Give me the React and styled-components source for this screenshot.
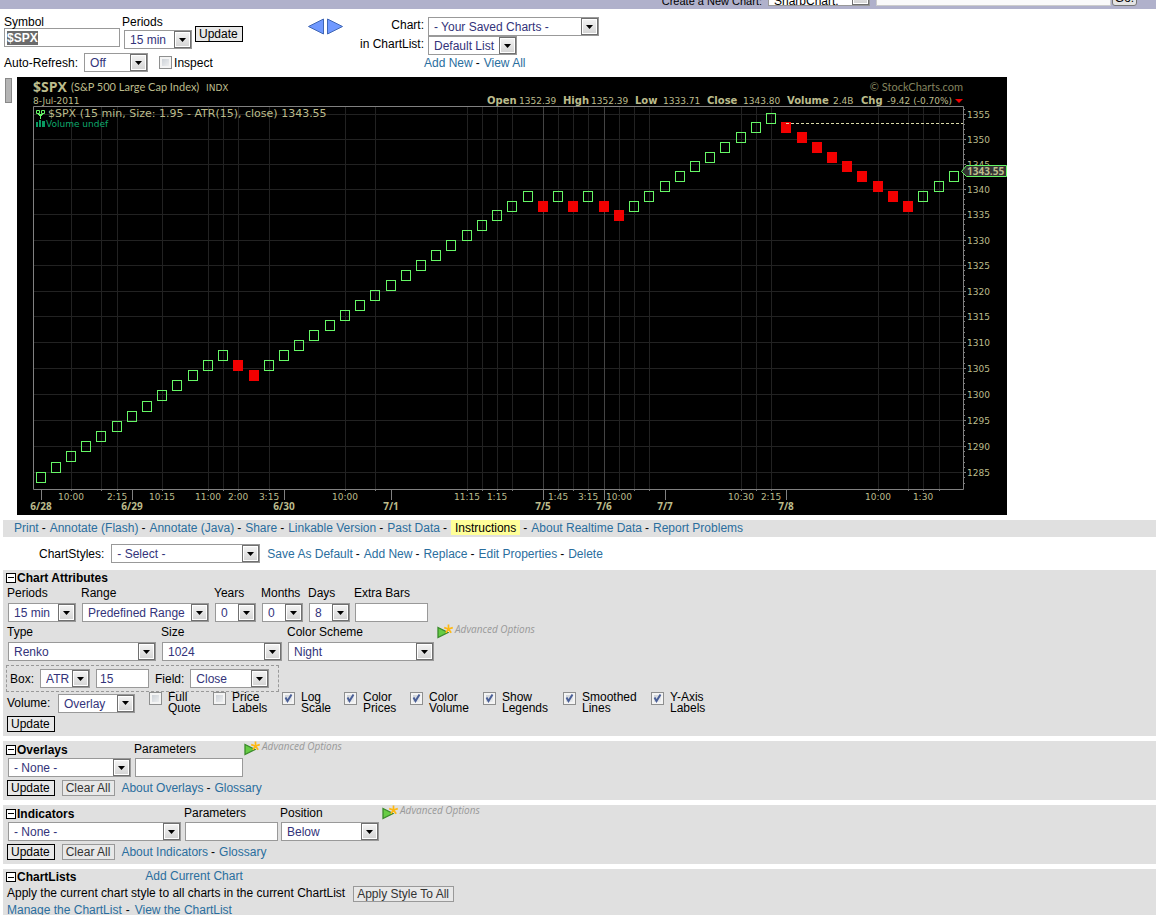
import React, { useEffect, useRef } from "react";
import styled, { createGlobalStyle } from "styled-components";

const GlobalStyle = createGlobalStyle`
	* {
		box-sizing: border-box;
	}
	body {
		margin: 0;
		background-color: #fff;
		color: #000;
		font: 12px/16px "Liberation Sans", Arial, sans-serif;
	}
	input, select, button {
		font: inherit;
		margin: 0;
		padding: 0;
		border-radius: 0;
	}
`;

/* ---------- shared controls ---------- */

const Link = styled.a`
	color: #2a6e9e;
	text-decoration: none;
	&:hover {
		text-decoration: underline;
	}
`;
const Dash = styled.span`
	width: 5px;
`;
const SelectFrame = styled.span`
	position: relative;
	display: flex;
	flex: none;
	width: ${(p) => p.$width}px;
	height: 19px;
	border: 1px solid #999;
	background-color: #fff;
`;
const SelectInput = styled.select`
	appearance: none;
	width: 100%;
	border: 0;
	padding: 2px 17px 0 5px;
	background-color: transparent;
	color: #33337a;
	line-height: 15px;
	outline: 0;
`;
const SelectArrow = styled.span`
	position: absolute;
	top: 0;
	right: 0;
	bottom: 0;
	width: 17px;
	display: flex;
	align-items: center;
	justify-content: center;
	border: 1px solid #707070;
	box-shadow: inset 0 0 0 1px #fff;
	background: linear-gradient(#f4f4f4, #d4d4d4);
	pointer-events: none;
`;
const TextInput = styled.input`
	width: ${(p) => p.$width}px;
	height: 19px;
	border: 1px solid #999;
	padding: 0 3px;
	background-color: #fff;
	color: #33337a;
	outline: 0;
`;
const Button = styled.button`
	flex: none;
	height: 16px;
	padding: 0 4px 0 3px;
	border: 1px solid ${(p) => (p.$muted ? "#999" : "#000")};
	background-color: #e8e8e8;
	color: ${(p) => (p.$muted ? "#333" : "#000")};
	line-height: 14px;
`;
const CheckLabel = styled.label`
	display: flex;
	gap: 6px;
	width: ${(p) => p.$width}px;
	line-height: 11px;
`;
const CheckFrame = styled.span`
	position: relative;
	flex: none;
	width: 13px;
	height: 13px;
`;
const CheckInput = styled.input`
	appearance: none;
	display: block;
	width: 13px;
	height: 13px;
	border: 1px solid #8e8f8f;
	box-shadow: inset 0 0 0 2px #f4f4f4;
	background: linear-gradient(135deg, #c4cad1, #f6f6f6);
	& + svg {
		display: none;
	}
	&:checked + svg {
		display: block;
	}
`;
const CheckMark = styled.svg`
	position: absolute;
	top: 0;
	left: 0;
	pointer-events: none;
`;

function Select({ value, width, label, id }) {
	return (
		<SelectFrame $width={width}>
			<SelectInput id={id} aria-label={label} defaultValue={value}>
				<option>{value}</option>
			</SelectInput>
			<SelectArrow>
				<svg width="7" height="4" viewBox="0 0 7 4">
					<path d="M0 0H7L3.5 4Z" fill="#000" />
				</svg>
			</SelectArrow>
		</SelectFrame>
	);
}

function Check({ checked, label }) {
	return (
		<CheckFrame>
			<CheckInput type="checkbox" defaultChecked={checked} aria-label={label} />
			<CheckMark width="13" height="13" viewBox="0 0 13 13">
				<path d="M3.5 5.5 L5.5 9 L9.5 2.5" fill="none" stroke="#4a5f97" strokeWidth="2" />
			</CheckMark>
		</CheckFrame>
	);
}

function LinkList({ items }) {
	return items.map((item, i) => (
		<React.Fragment key={item}>
			{i > 0 && <Dash>-</Dash>}
			<Link href="#">{item}</Link>
		</React.Fragment>
	));
}

/* ---------- top bar and symbol form ---------- */

const TopBar = styled.header`
	display: flex;
	align-items: flex-end;
	justify-content: flex-end;
	height: 9px;
	padding: 0 19px 3px 0;
	overflow: hidden;
	background-color: #b0b1cb;
	${SelectInput} {
		padding-top: 6px;
		color: #000;
	}
`;
const TopLabel = styled.label`
	margin-right: 6px;
	line-height: 10px;
	font-size: 11px;
`;
const TopInput = styled.input`
	width: 235px;
	height: 19px;
	margin: 0 1px 0 6px;
	border: 1px solid #ccc;
	background-color: #fafafa;
`;
const GoButton = styled.button`
	width: 25px;
	height: 19px;
	padding-top: 4px;
	border: 1px solid #777;
	border-radius: 3px;
	background-color: #e4e4e4;
	line-height: 13px;
`;
const FormBar = styled.div`
	display: flex;
	height: 68px;
	padding: 5px 4px 0;
`;
const SymbolForm = styled.form`
	width: 303px;
`;
const SymbolRow = styled.div`
	display: flex;
	height: 38px;
`;
const SymbolInput = styled(TextInput)`
	display: block;
	margin-top: -2px;
	padding: 0 2px;
	color: #000;
	font-weight: bold;
	&::selection {
		background-color: #6b6b6b;
		color: #fff;
	}
`;
const SymbolCell = styled.div`
	width: 118px;
`;
const PeriodCell = styled.div`
	width: 73px;
`;
const FormLabel = styled.label`
	display: block;
`;
const RefreshRow = styled.div`
	display: flex;
	align-items: center;
	height: 21px;
	gap: 6px;
`;
const InspectLabel = styled.label`
	display: flex;
	align-items: center;
	gap: 2px;
	margin-left: 5px;
`;
const UpdateCell = styled.div`
	padding-top: 12px;
`;
const Arrows = styled.svg`
	margin: 4px 0 0;
	flex: none;
`;
const SavedForm = styled.form`
	display: grid;
	grid-template-columns: 80px auto;
	grid-template-rows: 19px 19px 16px;
	column-gap: 4px;
	padding-top: 3px;
	line-height: 17px;
`;
const SavedLabel = styled.label`
	text-align: right;
`;
const SavedLinks = styled.div`
	grid-column: 2;
	display: flex;
	gap: 3px;
	margin-left: -4px;
`;

function SymbolBar() {
	const symbolRef = useRef(null);
	useEffect(() => {
		symbolRef.current.focus();
		symbolRef.current.select();
	}, []);
	return (
		<FormBar>
			<SymbolForm>
				<SymbolRow>
					<SymbolCell>
						<FormLabel htmlFor="symbol">Symbol</FormLabel>
						<SymbolInput id="symbol" ref={symbolRef} $width={116} defaultValue="$SPX" />
					</SymbolCell>
					<PeriodCell>
						<FormLabel htmlFor="top-period">Periods</FormLabel>
						<Indent>
							<Select id="top-period" value="15 min" width={68} />
						</Indent>
					</PeriodCell>
					<UpdateCell>
						<Button type="button">Update</Button>
					</UpdateCell>
				</SymbolRow>
				<RefreshRow>
					<label htmlFor="refresh">Auto-Refresh:</label>
					<Select id="refresh" value="Off" width={64} />
					<InspectLabel>
						<Check label="Inspect" />
						Inspect
					</InspectLabel>
				</RefreshRow>
			</SymbolForm>
			<Arrows width="37" height="17" viewBox="0 0 37 17">
				<path d="M1.5 8.5L16.5 1V16Z" fill="#7099ff" stroke="#3f66b5" />
				<path d="M35.5 8.5L20.5 1V16Z" fill="#7099ff" stroke="#3f66b5" />
			</Arrows>
			<SavedForm>
				<SavedLabel htmlFor="saved">Chart:</SavedLabel>
				<Select id="saved" value="- Your Saved Charts -" width={171} />
				<SavedLabel htmlFor="list">in ChartList:</SavedLabel>
				<Select id="list" value="Default List" width={89} />
				<SavedLinks>
					<LinkList items={["Add New", "View All"]} />
				</SavedLinks>
			</SavedForm>
		</FormBar>
	);
}

/* ---------- chart ---------- */

const ChartRow = styled.div`
	display: flex;
	align-items: flex-start;
	padding-left: 5px;
`;
const Handle = styled.div`
	flex: none;
	width: 7px;
	height: 25px;
	margin: 1px 5px 0 0;
	border: 1px solid #888;
	background-color: #b4b4b4;
`;
const ChartSvg = styled.svg`
	display: block;
	width: 100%;
	max-width: 990px;
	height: auto;
	background-color: #000;
	font: 9px "DejaVu Sans", Verdana, sans-serif;
	fill: #bcbc8c;
`;

const BRICK = 1.95;
const TOP_PRICE = 1354.2;
const RUNS = [-12, 2, -18, 1, -1, 1, -1, 2, -10, 9, -3];
const GRID_BARS = [
	2, 4, 5, 8, 11, 12, 13, 15, 20, 22, 28, 29, 30, 31, 34, 35, 36, 38, 39, 40,
	46, 47, 48, 55, 57, 58, 59,
];
const TIMES = [
	[2, "10:00"], [5, "2:15"], [8, "10:15"], [11, "11:00"], [13, "2:00"],
	[15, "3:15"], [20, "10:00"], [28, "11:15"], [30, "1:15"], [34, "1:45"],
	[36, "3:15"], [38, "10:00"], [46, "10:30"], [48, "2:15"], [55, "10:00"],
	[58, "1:30"],
];
const DATES = [
	[0, "6/28"], [6, "6/29"], [16, "6/30"], [23, "7/1"], [33, "7/5"],
	[37, "7/6"], [41, "7/7"], [49, "7/8"],
];
const PRICES = Array.from({ length: 15 }, (_, i) => 1355 - i * 5);
const QUOTE = [
	[470, "Open", 502, "1352.39"],
	[546, "High", 574, "1352.39"],
	[618, "Low", 646, "1333.71"],
	[690, "Close", 726, "1343.80"],
	[770, "Volume", 816, "2.4B"],
	[844, "Chg", 870, "-9.42 (-0.70%)"],
];

const xOf = (bar) => Math.floor(24 + bar * 15.221);
const priceY = (price) => 37 + 6750 * Math.log(1355 / price);
const yOf = (price) => Math.round(priceY(price));

function makeBricks() {
	let level = 36;
	const bricks = [{ level, down: false }];
	RUNS.forEach((run) => {
		const step = Math.sign(run);
		for (let i = 0; i < Math.abs(run); i++) {
			level += step;
			bricks.push({ level, down: step > 0 });
		}
	});
	return bricks;
}

function RenkoChart() {
	return (
		<ChartSvg viewBox="0 0 990 438" role="img" aria-label="$SPX Renko chart">
			<g stroke="#222">
				{PRICES.map((p) => (
					<path key={p} d={`M17 ${yOf(p) + 0.5}H946`} />
				))}
				{GRID_BARS.map((b) => (
					<path key={b} d={`M${xOf(b) + 0.5} 30V412`} />
				))}
			</g>
			<g stroke="#444">
				<path d={`M${xOf(33) + 0.5} 30V412M${xOf(37) + 0.5} 30V412`} />
			</g>
			<g stroke="#808080" fill="none">
				<path d="M16.5 412.5V29.5H946.5V412.5Z" />
				{DATES.map(([b]) => (
					<path key={b} d={`M${xOf(b) + 0.5} 413V423`} />
				))}
				{GRID_BARS.map((b) => (
					<path key={b} d={`M${xOf(b) + 0.5} 413V414`} />
				))}
				{PRICES.map((p) => (
					<path key={p} d={`M947 ${yOf(p) + 0.5}H949`} />
				))}
				{Array.from({ length: 74 }, (_, i) => 1356 - i)
					.filter((p) => yOf(p) < 412)
					.map((p) => (
						<path key={p} d={`M947 ${yOf(p) + 0.5}H948`} />
					))}
			</g>

			{makeBricks().map(({ level, down }, i) => {
				const x = xOf(i);
				const top = Math.round(priceY(TOP_PRICE - level * BRICK) - 5.4);
				return down ? (
					<rect key={i} x={x - 5} y={top} width="10" height="11" fill="#f20000" />
				) : (
					<rect key={i} x={x - 4.5} y={top + 0.5} width="9" height="10" fill="none" stroke="#66f766" />
				);
			})}
			<path d="M769 46.5H946" stroke="#d8d8a8" strokeDasharray="3 2" />

			<text x="16" y="15" fontSize="14" fontWeight="bold" fontFamily="Open Sans">$SPX</text>
			<text x="54" y="14" fontSize="11" fontFamily="Lato">(S&amp;P 500 Large Cap Index)</text>
			<text x="189" y="14">INDX</text>
			<text x="16" y="27">8-Jul-2011</text>
			<text x="946" y="14" fontSize="11" textAnchor="end" fontFamily="Lato" fill="#84845f">© StockCharts.com</text>
			{QUOTE.map(([lx, label, vx, value]) => (
				<React.Fragment key={label}>
					<text x={lx} y="27" fontSize="10" fontWeight="bold">{label}</text>
					<text x={vx} y="27">{value}</text>
				</React.Fragment>
			))}
			<path d="M938 22H946L942 26Z" fill="#f20000" />

			<path d="M19.5 33.5H22.5V36.5H19.5ZM24.5 33.5H27.5V36.5H24.5ZM21 37.5H26M22 38.5H25M23.5 39V42" fill="none" stroke="#66f766" />
			<text x="31" y="40" fontSize="11">$SPX (15 min, Size: 1.95 - ATR(15), close) 1343.55</text>
			<path d="M19 50V45H21V50ZM22 50V43H24V50ZM25 50V44H28V50Z" fill="#0a9a62" />
			<text x="29" y="50" fill="#0fa86c">Volume undef</text>

			{PRICES.map((p) => (
				<text key={p} x="950" y={yOf(p) + 4}>{p}</text>
			))}
			<path d="M944.5 94.5L949.5 88.5H989.5V99.5H949.5Z" fill="#333" stroke="#66f766" />
			<text x="950" y="98" fontSize="10" fontWeight="bold" fontFamily="Open Sans">1343.55</text>
			{TIMES.map(([b, t]) => (
				<text key={b} x={xOf(b)} y="423" textAnchor="middle">{t}</text>
			))}
			{DATES.map(([b, t]) => (
				<text key={b} x={xOf(b)} y="433" textAnchor="middle" fontSize="10" fontWeight="bold" fontFamily="Open Sans">{t}</text>
			))}
		</ChartSvg>
	);
}

/* ---------- link rows ---------- */

const LinkBar = styled.nav`
	display: flex;
	gap: 3px;
	margin: 5px 0 0 3px;
	padding-left: 11px;
	height: 17px;
	background-color: #e0e0e0;
`;
const Highlight = styled.a`
	height: 15px;
	padding: 0 4px;
	background-color: #ffff99;
	color: #000;
	text-decoration: none;
`;
const StyleRow = styled.div`
	display: flex;
	align-items: center;
	gap: 7px;
	height: 33px;
	padding-left: 39px;
`;
const StyleLinks = styled.span`
	display: flex;
	gap: 3px;
`;

/* ---------- settings panels ---------- */

const Panel = styled.section`
	margin: 0 0 5px 3px;
	padding: 0 3px 4px;
	background-color: #e0e0e0;
`;
const PanelTitle = styled.h2`
	display: flex;
	align-items: center;
	gap: 1px;
	height: ${(p) => p.$height || 17}px;
	margin: 0;
	font-size: 12px;
`;
const ToggleButton = styled.button`
	display: flex;
	align-items: center;
	justify-content: center;
	width: 10px;
	height: 10px;
	border: 1px solid #000;
	background-color: #fff;
`;
const Row = styled.div`
	display: flex;
	align-items: flex-start;
	padding-left: ${(p) => (p.$flush ? 0 : 1)}px;
	margin-bottom: ${(p) => p.$after || 0}px;
`;
const FieldBox = styled.div`
	width: ${(p) => p.$width}px;
`;
const FieldLabel = styled.label`
	display: block;
	height: ${(p) => (p.$tight ? 17 : 18)}px;
`;
const Indent = styled.div`
	display: flex;
	padding-left: 2px;
`;
const FieldControl = styled.div`
	display: flex;
	padding-left: 1px;
`;
const BoxRow = styled.div`
	display: flex;
	align-items: center;
	gap: 6px;
	width: 273px;
	height: 27px;
	padding: 0 3px;
	border: 1px dashed #999;
`;
const VolumeRow = styled.div`
	display: flex;
	height: 24px;
	padding: 0 0 0 1px;
`;
const VolumeField = styled.div`
	display: flex;
	align-items: center;
	justify-content: space-between;
	width: 128px;
	height: 22px;
	margin-right: 14px;
`;
const ButtonRow = styled.div`
	display: flex;
	align-items: center;
	gap: 6px;
	padding: 3px 0 0 1px;
`;
const ClearButton = styled(Button)`
	margin-left: 1px;
`;
const Advanced = styled.a`
	display: flex;
	gap: 2px;
	color: #999;
	font: italic 10px/11px "Open Sans", sans-serif;
	text-decoration: none;
`;
const ListHead = styled.div`
	display: flex;
	gap: 69px;
	line-height: 14px;
`;
const ListPanel = styled(Panel)`
	margin-bottom: 0;
	padding-bottom: 0;
`;
const ListRow = styled.div`
	display: flex;
	gap: ${(p) => p.$gap}px;
	height: 17px;
	padding-left: 1px;
	${Button} {
		align-self: flex-end;
	}
`;

function Title({ children, height }) {
	return (
		<PanelTitle $height={height}>
			<ToggleButton aria-label={`Collapse ${children}`}>
				<svg width="6" height="1" viewBox="0 0 6 1">
					<path d="M0 .5H6" stroke="#000" />
				</svg>
			</ToggleButton>
			{children}
		</PanelTitle>
	);
}

function Field({ id, label, pitch, width, value, tight }) {
	return (
		<FieldBox $width={pitch}>
			<FieldLabel htmlFor={id} $tight={tight}>{label}</FieldLabel>
			<FieldControl>
				{value ? (
					<Select id={id} value={value} width={width} />
				) : (
					<TextInput id={id} $width={width} />
				)}
			</FieldControl>
		</FieldBox>
	);
}

function AdvancedOptions() {
	return (
		<Advanced href="#">
			<svg width="16" height="15" viewBox="0 0 16 15">
				<path d="M1 3.5L11 8.5L1 13.5Z" fill="#66cc44" stroke="#3a8a2a" strokeWidth="1.3" />
				<path
					d="M11.5 5V0.5M11.5 5L15.8 3.6M11.5 5L14.2 8.7M11.5 5L8.8 8.7M11.5 5L7.2 3.6"
					stroke="#fdb813"
					strokeWidth="1.7"
				/>
			</svg>
			Advanced Options
		</Advanced>
	);
}

const CHECKS = [
	["Full", "Quote", false, 64],
	["Price", "Labels", false, 69],
	["Log", "Scale", true, 62],
	["Color", "Prices", true, 66],
	["Color", "Volume", true, 73],
	["Show", "Legends", true, 80],
	["Smoothed", "Lines", true, 88],
	["Y-Axis", "Labels", true, 70],
];

function App() {
	return (
		<>
			<GlobalStyle />
			<TopBar>
				<TopLabel htmlFor="new-chart">Create a New Chart:</TopLabel>
				<Select id="new-chart" value="SharpChart:" width={102} />
				<TopInput aria-label="New chart symbol" />
				<GoButton>Go!</GoButton>
			</TopBar>
			<SymbolBar />
			<ChartRow>
				<Handle />
				<RenkoChart />
			</ChartRow>
			<LinkBar>
				<LinkList
					items={["Print", "Annotate (Flash)", "Annotate (Java)", "Share", "Linkable Version", "Past Data"]}
				/>
				<Dash>-</Dash>
				<Highlight href="#">Instructions</Highlight>
				<Dash>-</Dash>
				<LinkList items={["About Realtime Data", "Report Problems"]} />
			</LinkBar>
			<StyleRow>
				<label htmlFor="chart-style">ChartStyles:</label>
				<Select id="chart-style" value="- Select -" width={149} />
				<StyleLinks>
					<LinkList items={["Save As Default", "Add New", "Replace", "Edit Properties", "Delete"]} />
				</StyleLinks>
			</StyleRow>

			<Panel>
				<Title height={15}>Chart Attributes</Title>
				<Row $after={2}>
					<Field id="period" label="Periods" pitch={74} width={68} value="15 min" />
					<Field id="range" label="Range" pitch={133} width={127} value="Predefined Range" />
					<Field id="years" label="Years" pitch={47} width={41} value="0" />
					<Field id="months" label="Months" pitch={47} width={41} value="0" />
					<Field id="days" label="Days" pitch={46} width={41} value="8" />
					<Field id="bars" label="Extra Bars" pitch={80} width={73} />
				</Row>
				<Row $after={4}>
					<Field id="type" label="Type" pitch={154} width={148} value="Renko" />
					<Field id="size" label="Size" pitch={126} width={120} value="1024" />
					<Field id="scheme" label="Color Scheme" pitch={150} width={146} value="Night" />
					<AdvancedOptions />
				</Row>
				<BoxRow>
					<label htmlFor="box">Box:</label>
					<Select id="box" value="ATR" width={50} />
					<TextInput aria-label="Box size" $width={53} defaultValue="15" />
					<label htmlFor="field">Field:</label>
					<Select id="field" value="Close" width={79} />
				</BoxRow>
				<VolumeRow>
					<VolumeField>
						<label htmlFor="volume">Volume:</label>
						<Select id="volume" value="Overlay" width={77} />
					</VolumeField>
					{CHECKS.map(([first, second, checked, width]) => (
						<CheckLabel key={first + second} $width={width}>
							<Check checked={checked} label={`${first} ${second}`} />
							<span>
								{first}
								<br />
								{second}
							</span>
						</CheckLabel>
					))}
				</VolumeRow>
				<Row>
					<Button>Update</Button>
				</Row>
			</Panel>

			<Panel>
				<Row $flush>
					<FieldBox $width={128}>
						<Title>Overlays</Title>
						<Indent>
							<Select label="Overlay" value="- None -" width={123} />
						</Indent>
					</FieldBox>
					<Field id="overlay-params" label="Parameters" pitch={110} width={108} tight />
					<AdvancedOptions />
				</Row>
				<ButtonRow>
					<Button>Update</Button>
					<ClearButton $muted>Clear All</ClearButton>
					<StyleLinks>
						<LinkList items={["About Overlays", "Glossary"]} />
					</StyleLinks>
				</ButtonRow>
			</Panel>

			<Panel>
				<Row $flush>
					<FieldBox $width={178}>
						<Title>Indicators</Title>
						<Indent>
							<Select label="Indicator" value="- None -" width={173} />
						</Indent>
					</FieldBox>
					<Field id="ind-params" label="Parameters" pitch={96} width={93} tight />
					<Field id="position" label="Position" pitch={102} width={98} value="Below" tight />
					<AdvancedOptions />
				</Row>
				<ButtonRow>
					<Button>Update</Button>
					<ClearButton $muted>Clear All</ClearButton>
					<StyleLinks>
						<LinkList items={["About Indicators", "Glossary"]} />
					</StyleLinks>
				</ButtonRow>
			</Panel>

			<ListPanel>
				<ListHead>
					<Title height={16}>ChartLists</Title>
					<Link href="#">Add Current Chart</Link>
				</ListHead>
				<ListRow $gap={8}>
					<span>Apply the current chart style to all charts in the current ChartList</span>
					<Button $muted>Apply Style To All</Button>
				</ListRow>
				<ListRow $gap={4}>
					<Link href="#">Manage the ChartList</Link>
					<Dash>-</Dash>
					<Link href="#">View the ChartList</Link>
				</ListRow>
			</ListPanel>
		</>
	);
}

export default App;
